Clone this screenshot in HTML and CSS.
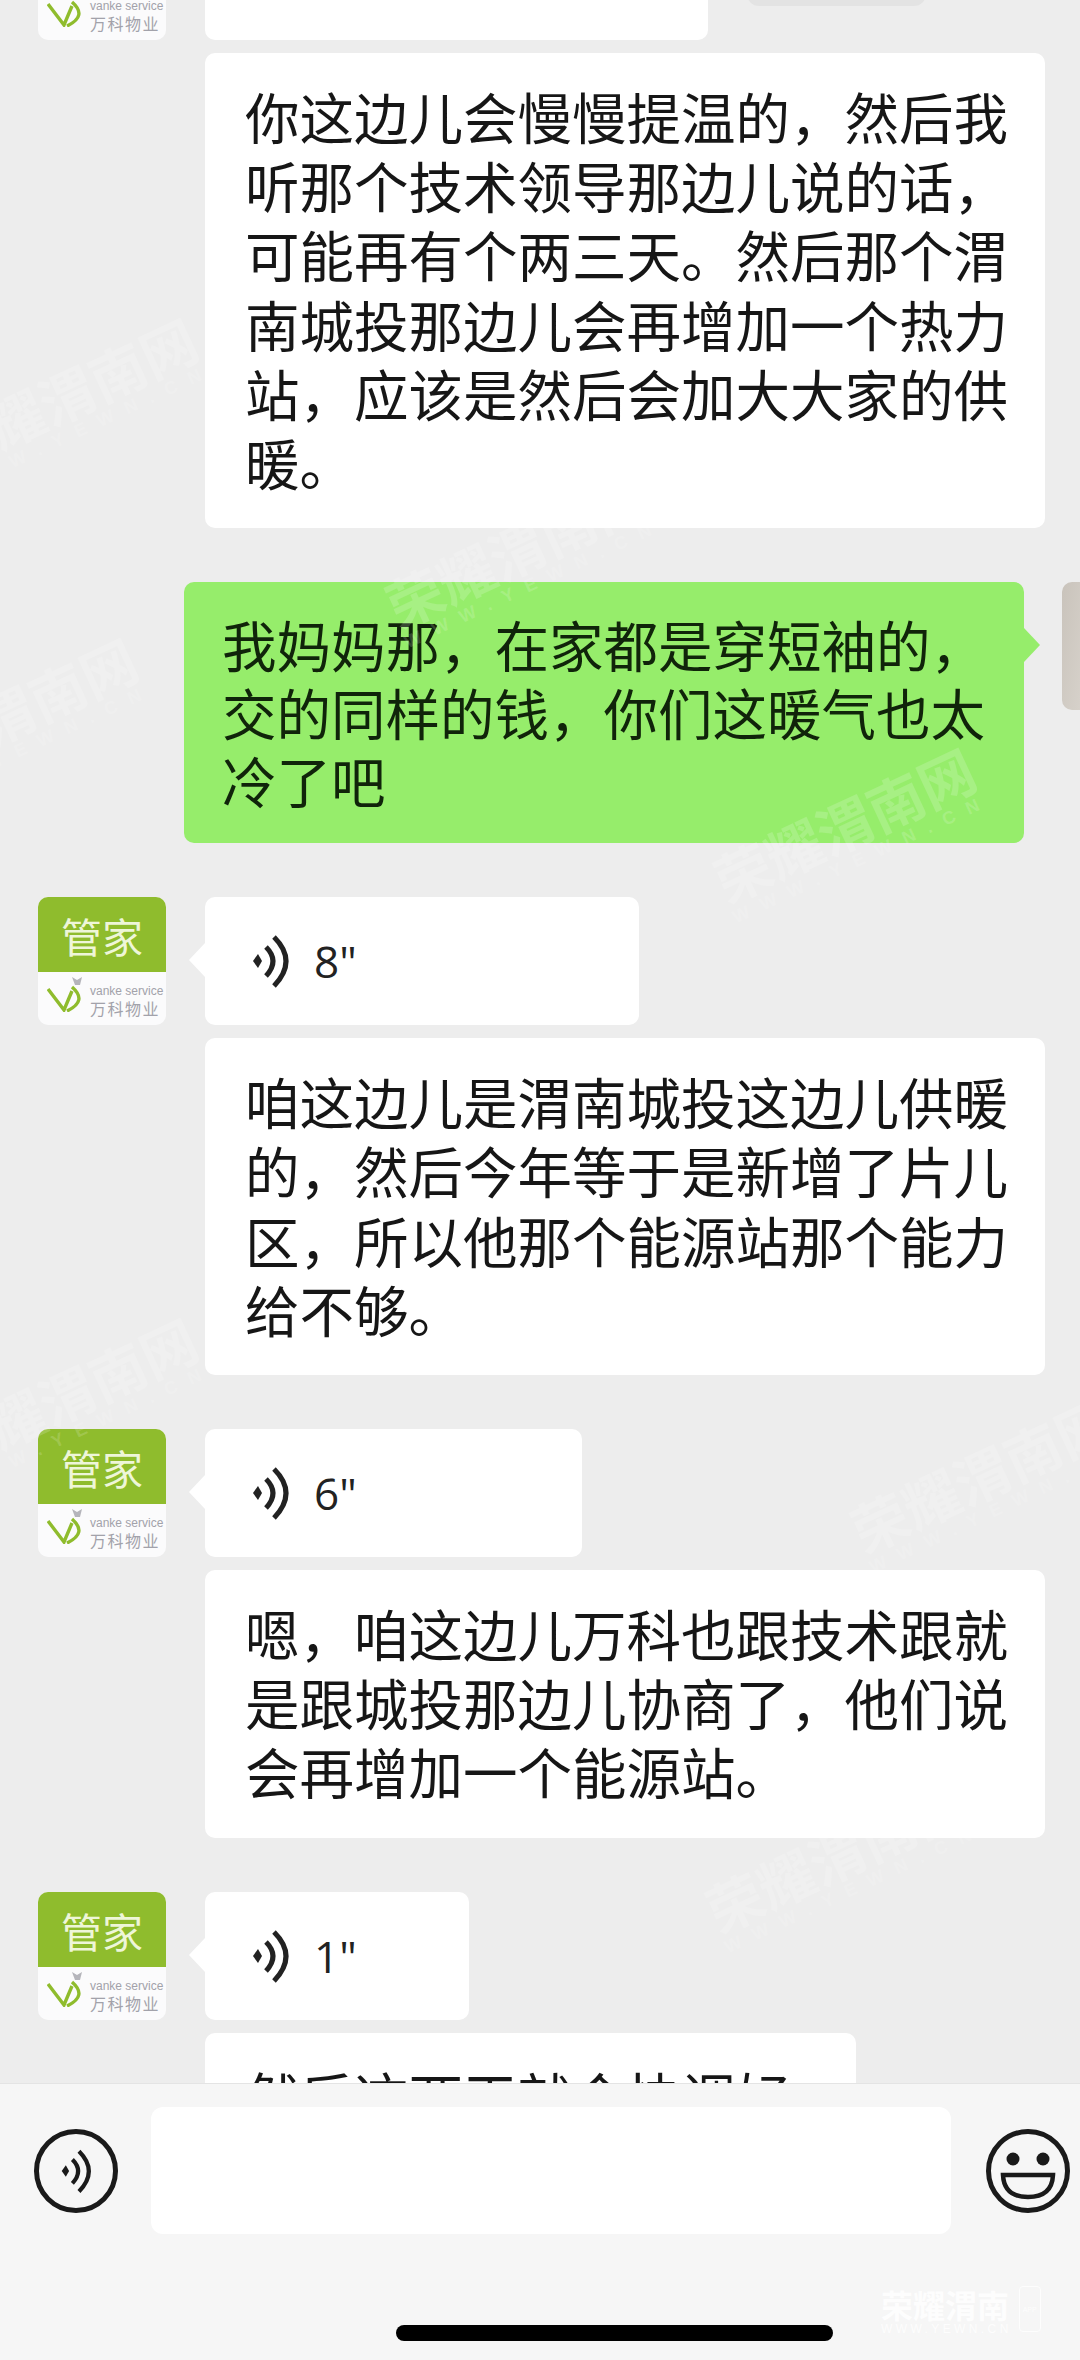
FILE: index.html
```html
<!DOCTYPE html>
<html lang="zh-CN">

<head>
    <meta charset="UTF-8">
    <meta name="viewport" content="width=device-width, initial-scale=1.0">
    <title>聊天</title>
    <link rel="stylesheet" href="styles.css">
</head>

<body>
    <svg class="defs" width="0" height="0" aria-hidden="true">
        <symbol id="wave" viewBox="0 0 40 56">
            <path d="M2 28 L7 21 L11 28 L7 35 Z" fill="currentColor" />
            <path d="M15 14 Q29 28 15 43" fill="none" stroke="currentColor" stroke-width="5" />
            <path d="M23 4 Q47 28 23 53" fill="none" stroke="currentColor" stroke-width="5" />
        </symbol>
        <symbol id="vs" viewBox="0 0 38 38">
            <path d="M1 15 L17 36 L25 17" fill="none" stroke="#8fbc2d" stroke-width="3.4" />
            <path d="M25 13 Q41 27 20 37" fill="none" stroke="#8fbc2d" stroke-width="3.4" />
            <path d="M25 3 L30 6 L35 3 L33 11 L28 11 Z" fill="#b5b5bb" />
        </symbol>
    </svg>

    <main class="chat">
        <section class="group">
            <div class="avatar">
                <div class="avatar-top">管家</div>
                <div class="avatar-bottom">
                    <svg class="vs-mark"><use href="#vs" /></svg>
                    <div class="vs-text"><span class="vs-en">vanke service</span><span class="vs-cn">万科物业</span></div>
                </div>
            </div>
            <div class="bubbles">
                <div class="voice-row">
                    <div class="bubble voice voice-top"></div>
                    <div class="pill"></div>
                </div>
                <div class="bubble text">你这边儿会慢慢提温的，然后我听那个技术领导那边儿说的话，可能再有个两三天。然后那个渭南城投那边儿会再增加一个热力站，应该是然后会加大大家的供暖。</div>
            </div>
        </section>

        <section class="group mine">
            <div class="bubble text green">我妈妈那，在家都是穿短袖的，交的同样的钱，你们这暖气也太冷了吧</div>
            <div class="avatar me"></div>
        </section>

        <section class="group">
            <div class="avatar">
                <div class="avatar-top">管家</div>
                <div class="avatar-bottom">
                    <svg class="vs-mark"><use href="#vs" /></svg>
                    <div class="vs-text"><span class="vs-en">vanke service</span><span class="vs-cn">万科物业</span></div>
                </div>
            </div>
            <div class="bubbles">
                <div class="bubble voice voice-8 tail">
                    <svg class="wave"><use href="#wave" /></svg>
                    <span class="secs">8"</span>
                </div>
                <div class="bubble text">咱这边儿是渭南城投这边儿供暖的，然后今年等于是新增了片儿区，所以他那个能源站那个能力给不够。</div>
            </div>
        </section>

        <section class="group">
            <div class="avatar">
                <div class="avatar-top">管家</div>
                <div class="avatar-bottom">
                    <svg class="vs-mark"><use href="#vs" /></svg>
                    <div class="vs-text"><span class="vs-en">vanke service</span><span class="vs-cn">万科物业</span></div>
                </div>
            </div>
            <div class="bubbles">
                <div class="bubble voice voice-6 tail">
                    <svg class="wave"><use href="#wave" /></svg>
                    <span class="secs">6"</span>
                </div>
                <div class="bubble text">嗯，咱这边儿万科也跟技术跟就是跟城投那边儿协商了，他们说会再增加一个能源站。</div>
            </div>
        </section>

        <section class="group">
            <div class="avatar">
                <div class="avatar-top">管家</div>
                <div class="avatar-bottom">
                    <svg class="vs-mark"><use href="#vs" /></svg>
                    <div class="vs-text"><span class="vs-en">vanke service</span><span class="vs-cn">万科物业</span></div>
                </div>
            </div>
            <div class="bubbles">
                <div class="bubble voice voice-1 tail">
                    <svg class="wave"><use href="#wave" /></svg>
                    <span class="secs">1"</span>
                </div>
                <div class="bubble text last">然后这两天就会快调好</div>
            </div>
        </section>
    </main>

    <footer class="bar">
        <div class="bar-row">
            <div class="round-btn">
                <svg class="bar-wave"><use href="#wave" /></svg>
            </div>
            <div class="input-box"></div>
            <svg class="smile" viewBox="0 0 84 84">
                <circle cx="42" cy="42" r="39.5" fill="none" stroke="#1a1a1a" stroke-width="5" />
                <circle cx="27" cy="30" r="6.5" fill="#1a1a1a" />
                <circle cx="57" cy="30" r="6.5" fill="#1a1a1a" />
                <path d="M17 46 H67 Q66 68 42 68 Q18 68 17 46 Z" fill="none" stroke="#1a1a1a" stroke-width="4.5" />
            </svg>
        </div>
        <div class="home-bar"></div>
    </footer>

    <!-- 水印 -->
    <div class="mark mark-1">荣耀渭南网<small>WWW.YEWN.CN</small></div>
    <div class="mark mark-2">荣耀渭南网<small>WWW.YEWN.CN</small></div>
    <div class="mark mark-3">荣耀渭南网<small>WWW.YEWN.CN</small></div>
    <div class="mark mark-4">荣耀渭南网<small>WWW.YEWN.CN</small></div>
    <div class="mark mark-5">荣耀渭南网<small>WWW.YEWN.CN</small></div>
    <div class="mark mark-6">荣耀渭南网<small>WWW.YEWN.CN</small></div>
    <div class="mark mark-7">荣耀渭南网<small>WWW.YEWN.CN</small></div>
    <div class="logo-mark">
        <div class="logo-text">荣耀渭南<small>WWW.YEWN.CN</small></div>
        <div class="logo-phone">APP</div>
    </div>
</body>

</html>
```

FILE: styles.css
```css
* {
    margin: 0;
    padding: 0;
    box-sizing: border-box;
    font-family: "Noto Sans CJK SC", "Noto Sans", sans-serif;
}

body {
    position: relative;
    width: 1080px;
    height: 2360px;
    overflow: hidden;
    background-color: #ededed;
}

.defs {
    position: absolute;
}

.chat {
    height: 2083px;
    overflow: hidden;
}

.group {
    display: flex;
    align-items: flex-start;
    gap: 39px;
    padding-left: 38px;
    margin-bottom: 54px;
}

.group:first-child {
    margin-top: -88px;
}

.group.mine {
    padding-left: 184px;
    gap: 38px;
}

.bubbles {
    display: flex;
    flex-direction: column;
    gap: 13px;
}

.avatar {
    flex: none;
    width: 128px;
    height: 128px;
    border-radius: 10px;
    overflow: hidden;
    background-color: #fbfbfc;
}

.avatar.me {
    background: linear-gradient(100deg, #c9c3bb, #e4e0da 55%, #cfcac4);
}

.avatar-top {
    height: 75px;
    background-color: #8fbc2d;
    color: #eef6d8;
    font-size: 41px;
    line-height: 76px;
    text-align: center;
}

.avatar-bottom {
    display: flex;
    align-items: flex-start;
    gap: 5px;
    padding: 2px 0 0 9px;
}

.vs-mark {
    flex: none;
    width: 38px;
    height: 38px;
}

.vs-text {
    display: flex;
    flex-direction: column;
    margin-top: 10px;
    color: #a2a2aa;
}

.vs-en {
    font-family: "Liberation Sans", sans-serif;
    font-size: 12px;
    line-height: 14px;
    white-space: nowrap;
}

.vs-cn {
    font-size: 16px;
    line-height: 20px;
    letter-spacing: 1.5px;
    white-space: nowrap;
}

.bubble {
    position: relative;
    background-color: #fff;
    border-radius: 10px;
}

.text {
    width: 840px;
    padding: 28px 30px 32px 40px;
    font-size: 54.5px;
    line-height: 69.2px;
    color: #161616;
}

.text.last {
    width: 651px;
}

.green {
    flex: none;
    background-color: #96ed6b;
    padding: 28px 30px 29px 38px;
    line-height: 68px;
    color: #10240a;
}

.green::after {
    content: "";
    position: absolute;
    top: 46px;
    right: -16px;
    border-left: 16px solid #96ed6b;
    border-top: 17px solid transparent;
    border-bottom: 17px solid transparent;
}

.voice {
    display: flex;
    align-items: center;
    height: 128px;
    padding-left: 46px;
    color: #222;
}

.voice-row {
    display: flex;
    align-items: flex-start;
    gap: 39px;
}

.voice-top {
    width: 503px;
}

.pill {
    width: 179px;
    height: 94px;
    border-radius: 12px;
    background-color: #e3e3e3;
}

.voice-8 {
    width: 434px;
}

.voice-6 {
    width: 377px;
}

.voice-1 {
    width: 264px;
}

.tail::before {
    content: "";
    position: absolute;
    top: 46px;
    left: -16px;
    border-right: 16px solid #fff;
    border-top: 17px solid transparent;
    border-bottom: 17px solid transparent;
}

.wave {
    width: 40px;
    height: 56px;
}

.secs {
    margin-left: 23px;
    font-family: "Open Sans", sans-serif;
    font-size: 44px;
}

.bar {
    height: 277px;
    background-color: #f6f6f6;
    border-top: 1px solid #e4e4e4;
}

.bar-row {
    display: flex;
    align-items: center;
    height: 127px;
    margin-top: 23px;
    padding-left: 34px;
}

.round-btn {
    display: flex;
    align-items: center;
    justify-content: center;
    flex: none;
    width: 84px;
    height: 84px;
    border: 5px solid #1a1a1a;
    border-radius: 50%;
    color: #1a1a1a;
}

.bar-wave {
    width: 33px;
    height: 46px;
}

.input-box {
    flex: none;
    width: 800px;
    height: 127px;
    margin: 0 35px 0 33px;
    border-radius: 12px;
    background-color: #fff;
}

.smile {
    flex: none;
    width: 84px;
    height: 84px;
}

.home-bar {
    width: 437px;
    height: 16px;
    margin: 91px 0 0 396px;
    border-radius: 8px;
    background-color: #000;
}

/* 斜着的水印 */
.mark {
    position: absolute;
    color: rgba(255, 255, 255, 0.17);
    font-size: 56px;
    font-weight: 700;
    line-height: 58px;
    white-space: nowrap;
    transform: rotate(-25deg);
    pointer-events: none;
}

.mark small {
    display: block;
    font-family: "Liberation Sans", sans-serif;
    font-size: 18px;
    line-height: 20px;
    letter-spacing: 13px;
}

.mark-1 {
    left: -70px;
    top: 363px;
}

.mark-2 {
    left: -130px;
    top: 683px;
}

.mark-3 {
    left: 380px;
    top: 518px;
}

.mark-4 {
    left: 708px;
    top: 793px;
}

.mark-5 {
    left: 845px;
    top: 1443px;
}

.mark-6 {
    left: -70px;
    top: 1363px;
}

.mark-7 {
    left: 700px;
    top: 1823px;
}

.logo-mark {
    position: absolute;
    left: 881px;
    top: 2286px;
    display: flex;
    gap: 7px;
    color: rgba(255, 255, 255, 0.8);
}

.logo-text {
    font-size: 32px;
    font-weight: 700;
    line-height: 36px;
    white-space: nowrap;
}

.logo-text small {
    display: block;
    font-family: "Liberation Sans", sans-serif;
    font-size: 12px;
    font-weight: 400;
    line-height: 14px;
    letter-spacing: 3.4px;
}

.logo-phone {
    display: flex;
    align-items: center;
    justify-content: center;
    width: 22px;
    height: 46px;
    border: 1px solid rgba(255, 255, 255, 0.8);
    border-radius: 4px;
    font-family: "Liberation Sans", sans-serif;
    font-size: 7px;
}
```
